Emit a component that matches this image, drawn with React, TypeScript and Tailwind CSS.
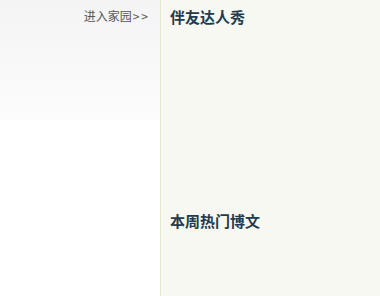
export default function App() {
  const font = { fontFamily: '"Noto Sans CJK SC", "DejaVu Sans", sans-serif' };
  return (
    <div className="flex w-[380px] h-[296px] overflow-hidden bg-white" style={font}>
      <div className="w-[160px] shrink-0 flex flex-col">
        <div className="h-[120px] bg-gradient-to-b from-[#f4f4f4] to-[#fcfcfc] pt-[7px] pr-[10px] text-right text-[12px] leading-[18px] text-[#555555]">
          进入家园<span className="tracking-[2px] ml-[1px]">&gt;&gt;</span>
        </div>
        <div className="flex-1 bg-white" />
      </div>
      <div className="flex-1 border-l border-[#e1ecc9] bg-[#f6f8f1] pl-[9px] flex flex-col">
        <div className="h-[206px] pt-[7px] text-[15px] leading-[20px] font-bold text-[#233a4f]">伴友达人秀</div>
        <div className="pt-[5px] text-[15px] leading-[20px] font-bold text-[#233a4f]">本周热门博文</div>
      </div>
    </div>
  );
}
